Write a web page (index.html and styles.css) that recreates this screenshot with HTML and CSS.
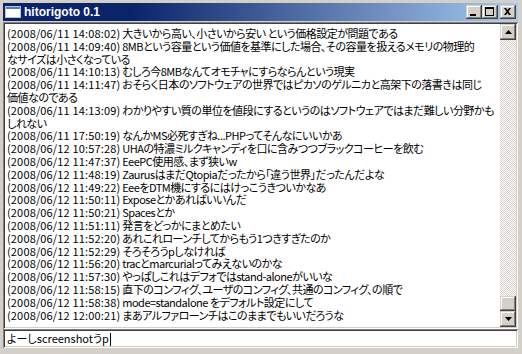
FILE: index.html
```html
<!DOCTYPE html>
<html lang="ja">
<head>
    <meta charset="UTF-8">
    <title>hitorigoto 0.1</title>
    <link rel="stylesheet" href="styles.css">
</head>
<body>
    <div class="window">
        <div class="titlebar">
            <svg class="app-icon" width="16" height="14" viewBox="0 0 16 14">
                <rect x="0.5" y="1.5" width="15" height="11" fill="#fff" stroke="#b8c4dc"/>
                <rect x="1" y="2" width="14" height="2" fill="#5a78b8"/>
            </svg>
            <span class="title">hitorigoto 0.1</span>
            <div class="controls">
                <div class="ctl">
                    <svg width="16" height="14" viewBox="0 0 16 14"><rect x="4" y="9" width="6" height="2" fill="#000"/></svg>
                </div>
                <div class="ctl">
                    <svg width="16" height="14" viewBox="0 0 16 14"><path d="M3 2h9v9H3z M4 4v6h7V4z" fill="#000" fill-rule="evenodd"/></svg>
                </div>
                <div class="ctl close">
                    <svg width="16" height="14" viewBox="0 0 16 14"><path d="M4 3h2l1.5 2 1.5-2h2l-2.5 3.5 2.5 3.5h-2l-1.5-2-1.5 2h-2l2.5-3.5z" fill="#000"/></svg>
                </div>
            </div>
        </div>

        <div class="log">
            <div class="entries">
                <div><span class="time">(2008/06/11 14:08:02)</span> 大きいから高い、小さいから安い という価格設定が問題である</div>
                <div><span class="time">(2008/06/11 14:09:40)</span> 8MBという容量という価値を基準にした場合、その容量を扱えるメモリの物理的<br>なサイズは小さくなっている</div>
                <div><span class="time">(2008/06/11 14:10:13)</span> むしろ今8MBなんてオモチャにすらならんという現実</div>
                <div><span class="time">(2008/06/11 14:11:47)</span> おそらく日本のソフトウェアの世界ではピカソのゲルニカと高架下の落書きは同じ<br>価値なのである</div>
                <div><span class="time">(2008/06/11 14:13:09)</span> わかりやすい質の単位を値段にするというのはソフトウェアではまだ難しい分野かも<br>しれない</div>
                <div><span class="time">(2008/06/11 17:50:19)</span> なんかMS必死すぎね...PHPってそんなにいいかあ</div>
                <div><span class="time">(2008/06/12 10:57:28)</span> UHAの特濃ミルクキャンディを口に含みつつブラックコーヒーを飲む</div>
                <div><span class="time">(2008/06/12 11:47:37)</span> EeePC使用感、まず狭いw</div>
                <div><span class="time">(2008/06/12 11:48:19)</span> ZaurusはまだQtopiaだったから「違う世界」だったんだよな</div>
                <div><span class="time">(2008/06/12 11:49:22)</span> EeeをDTM機にするにはけっこうきついかなあ</div>
                <div><span class="time">(2008/06/12 11:50:11)</span> Exposeとかあればいいんだ</div>
                <div><span class="time">(2008/06/12 11:50:21)</span> Spacesとか</div>
                <div><span class="time">(2008/06/12 11:51:11)</span> 発言をどっかにまとめたい</div>
                <div><span class="time">(2008/06/12 11:52:20)</span> あれこれローンチしてからもう1つきすぎたのか</div>
                <div><span class="time">(2008/06/12 11:52:29)</span> そろそろうpしなければ</div>
                <div><span class="time">(2008/06/12 11:56:20)</span> tracとmarcurialってみえないのかな</div>
                <div><span class="time">(2008/06/12 11:57:30)</span> やっぱしこれはデフォではstand-aloneがいいな</div>
                <div><span class="time">(2008/06/12 11:58:15)</span> 直下のコンフィグ、ユーザのコンフィグ、共通のコンフィグ、の順で</div>
                <div><span class="time">(2008/06/12 11:58:38)</span> mode=standalone をデフォルト設定にして</div>
                <div><span class="time">(2008/06/12 12:00:21)</span> まあアルファローンチはこのままでもいいだろうな</div>
            </div>
            <div class="scrollbar">
                <div class="sb-btn">
                    <svg width="7" height="4" viewBox="0 0 7 4"><path d="M3.5 0L7 4H0z" fill="#000"/></svg>
                </div>
                <div class="sb-track"><div class="sb-thumb"></div></div>
                <div class="sb-btn">
                    <svg width="7" height="4" viewBox="0 0 7 4"><path d="M0 0h7L3.5 4z" fill="#000"/></svg>
                </div>
            </div>
        </div>

        <div class="input">よーしscreenshotうp<span class="caret"></span></div>
    </div>
</body>
</html>
```

FILE: styles.css
```css
body {
    margin: 0;
    background-color: #d4d0c8;
    font-family: "Noto Sans CJK JP", sans-serif;
}
.window {
    width: 522px;
    height: 354px;
    box-sizing: border-box;
    padding: 3px 4px 6px 3px;
    display: flex;
    flex-direction: column;
    background-color: #d4d0c8;
}
.titlebar {
    flex: none;
    height: 18px;
    display: flex;
    align-items: center;
    padding-left: 2px;
    background: linear-gradient(to right, #0a246a 0%, #0a246a 25%, #a6caf0 100%);
    color: #fff;
}
.app-icon {
    margin-right: 3px;
}
.title {
    font-family: "Liberation Sans", Arial, sans-serif;
    font-weight: bold;
    font-size: 12px;
}
.controls {
    margin-left: auto;
    margin-right: 2px;
    display: flex;
}
.ctl, .sb-btn, .sb-thumb {
    background-color: #d4d0c8;
    box-shadow: inset -1px -1px #404040, inset 1px 1px #d4d0c8, inset -2px -2px #808080, inset 2px 2px #fff;
}
.ctl {
    width: 16px;
    height: 14px;
}
.ctl svg {
    display: block;
}
.close {
    margin-left: 2px;
}
.log {
    flex: none;
    height: 307px;
    margin-top: 1px;
    box-sizing: border-box;
    padding: 2px;
    display: flex;
    background-color: #fff;
    box-shadow: inset 1px 1px #808080, inset -1px -1px #fff, inset 2px 2px #404040, inset -2px -2px #d4d0c8;
}
.entries {
    flex: 1;
    overflow: hidden;
    padding: 3px 0 0 2px;
    font-size: 11px;
    line-height: 12.8px;
    letter-spacing: -0.5px;
    white-space: nowrap;
    color: #000;
    font-feature-settings: "palt";
}
.time {
    letter-spacing: 0.15px;
}
.scrollbar {
    width: 16px;
    display: flex;
    flex-direction: column;
}
.sb-btn {
    height: 16px;
    display: flex;
    align-items: center;
    justify-content: center;
}
.sb-track {
    flex: 1;
    display: flex;
    flex-direction: column;
    justify-content: flex-end;
    background-image: conic-gradient(#fff 25%, #d4d0c8 0 50%, #fff 0 75%, #d4d0c8 0);
    background-size: 2px 2px;
}
.sb-thumb {
    height: 15px;
}
.input {
    flex: none;
    height: 19px;
    box-sizing: border-box;
    padding: 2px 0 0 4px;
    background-color: #fff;
    box-shadow: inset 1px 1px #808080, inset -1px -1px #fff, inset 2px 2px #404040, inset -2px -2px #d4d0c8;
    font-size: 11px;
    line-height: 15px;
    font-feature-settings: "palt";
    white-space: nowrap;
}
.caret {
    display: inline-block;
    width: 1px;
    height: 13px;
    margin-left: 1px;
    vertical-align: -3px;
    background-color: #000;
}
```
